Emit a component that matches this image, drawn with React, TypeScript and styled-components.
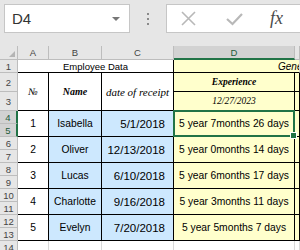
import React from "react";
import styled, { createGlobalStyle } from "styled-components";

const GlobalStyle = createGlobalStyle`
  html, body {
    margin: 0;
    padding: 0;
    width: 300px;
    height: 250px;
    overflow: hidden;
    background: #ffffff;
    font-family: "Liberation Sans", Arial, sans-serif;
  }
`;

const GREEN = "#217346";
const GRID = "#d9d9d9";
const BLUE = "#cde8fe";
const YELLOW = "#ffffcc";

const FormulaBar = styled.div`
  display: flex;
  align-items: flex-start;
  height: 46px;
  padding: 4px 0 0 4px;
  box-sizing: border-box;
  background: #e6e6e6;
`;

const NameBox = styled.div`
  display: flex;
  align-items: center;
  justify-content: space-between;
  width: 126px;
  height: 29px;
  box-sizing: border-box;
  padding: 0 9px 0 7px;
  background: #fff;
  border: 1px solid #c6c6c6;
  font-size: 15px;
  color: #333;
`;

const Caret = styled.span`
  width: 0;
  height: 0;
  border-left: 4px solid transparent;
  border-right: 4px solid transparent;
  border-top: 4px solid #777;
`;

const Dots = styled.div`
  display: flex;
  flex-direction: column;
  gap: 3px;
  margin: 9px 0 0 17px;
  span {
    width: 2px;
    height: 2px;
    background: #8a8a8a;
  }
`;

const FormulaBox = styled.div`
  display: flex;
  align-items: center;
  flex: 1;
  height: 29px;
  margin-left: 17px;
  box-sizing: border-box;
  padding-left: 14px;
  background: #fff;
  border: 1px solid #c6c6c6;
  border-right: none;
`;

const Tool = styled.span<{ $gap: number }>`
  display: flex;
  margin-left: ${(p) => p.$gap}px;
`;

const Fx = styled.span`
  font-family: "Liberation Serif", serif;
  font-style: italic;
  font-size: 18px;
  color: #4a4a4a;
  margin-left: 27px;
`;

const Sheet = styled.div`
  display: grid;
  grid-template-columns: 18px 31px 53px 72px 121px 1fr;
  grid-template-rows: 14px 13px 19px 19px repeat(10, 13px) 13px;
`;

const Corner = styled.div`
  grid-column: 1;
  grid-row: 1;
  position: relative;
  background: #e6e6e6;
  border-right: 1px solid #bdbdbd;
  border-bottom: 1px solid #bdbdbd;
  &::after {
    content: "";
    position: absolute;
    right: 2px;
    bottom: 2px;
    border-left: 6px solid transparent;
    border-bottom: 6px solid #b4b4b4;
  }
`;

const ColHead = styled.div<{ $c: number; $sel?: boolean }>`
  grid-column: ${(p) => p.$c};
  grid-row: 1;
  display: flex;
  align-items: center;
  justify-content: center;
  background: ${(p) => (p.$sel ? "#d2d2d2" : "#e6e6e6")};
  border-right: 1px solid #bdbdbd;
  border-bottom: ${(p) => (p.$sel ? `2px solid ${GREEN}` : "1px solid #bdbdbd")};
  font-size: 9.5px;
  color: ${(p) => (p.$sel ? "#1e5c3a" : "#444")};
`;

const RowHead = styled.div<{ $r: number; $sel?: boolean }>`
  grid-column: 1;
  grid-row: ${(p) => p.$r};
  display: flex;
  align-items: center;
  justify-content: center;
  background: ${(p) => (p.$sel ? "#d2d2d2" : "#e6e6e6")};
  border-right: ${(p) => (p.$sel ? `2px solid ${GREEN}` : "1px solid #bdbdbd")};
  border-bottom: 1px solid #bdbdbd;
  font-size: 9.5px;
  color: ${(p) => (p.$sel ? "#1e5c3a" : "#444")};
`;

const Cell = styled.div<{
  $c: number;
  $r: number;
  $cs?: number;
  $rs?: number;
  $bg?: string;
  $right?: string;
  $bottom?: string;
  $align?: string;
}>`
  grid-column: ${(p) => p.$c} / span ${(p) => p.$cs ?? 1};
  grid-row: ${(p) => p.$r} / span ${(p) => p.$rs ?? 1};
  display: flex;
  align-items: center;
  justify-content: ${(p) => p.$align ?? "center"};
  min-width: 0;
  overflow: hidden;
  white-space: nowrap;
  background: ${(p) => p.$bg ?? "#fff"};
  border-right: 1px solid ${(p) => p.$right ?? GRID};
  border-bottom: 1px solid ${(p) => p.$bottom ?? GRID};
  font-size: 10.3px;
  color: #000;
`;

const Title = styled.span`
  font-size: 9.5px;
`;

const GroupTitle = styled.span`
  font-style: italic;
  font-size: 10px;
  padding-left: 104px;
`;

const Caption = styled.span<{ $size: number; $bold?: boolean }>`
  font-family: "Liberation Serif", serif;
  font-style: italic;
  font-weight: ${(p) => (p.$bold ? 700 : 400)};
  font-size: ${(p) => p.$size}px;
`;

const DateText = styled.span`
  font-size: 11.5px;
  padding-right: 8px;
`;

const Selected = styled.div`
  position: absolute;
  inset: -1px;
  border: 2px solid ${GREEN};
  pointer-events: none;
`;

const Handle = styled.div`
  position: absolute;
  right: -4px;
  bottom: -4px;
  width: 5px;
  height: 5px;
  background: ${GREEN};
  border: 1px solid #fff;
`;

const ActiveCell = styled(Cell)`
  position: relative;
  overflow: visible;
`;

const employees = [
  { n: 1, name: "Isabella", date: "5/1/2018", exp: "5 year 7months 26 days" },
  { n: 2, name: "Oliver", date: "12/13/2018", exp: "5 year 0months 14 days" },
  { n: 3, name: "Lucas", date: "6/10/2018", exp: "5 year 6months 17 days" },
  { n: 4, name: "Charlotte", date: "9/16/2018", exp: "5 year 3months 11 days" },
  { n: 5, name: "Evelyn", date: "7/20/2018", exp: "5 year 5months 7 days" },
];

const B = "#000";

const App: React.FC = () => {
  const rows = Array.from({ length: 14 }, (_, i) => i + 1);
  return (
    <>
      <GlobalStyle />
      <FormulaBar>
        <NameBox>
          D4
          <Caret />
        </NameBox>
        <Dots>
          <span />
          <span />
          <span />
        </Dots>
        <FormulaBox>
          <Tool $gap={0}>
            <svg width="15" height="15" viewBox="0 0 15 15">
              <path d="M1 1 L14 14 M14 1 L1 14" stroke="#b8b8b8" strokeWidth="1.6" fill="none" />
            </svg>
          </Tool>
          <Tool $gap={30}>
            <svg width="17" height="14" viewBox="0 0 17 14">
              <path d="M1 7 L6.5 12 L16 2" stroke="#b8b8b8" strokeWidth="2.2" fill="none" />
            </svg>
          </Tool>
          <Fx>fx</Fx>
        </FormulaBox>
      </FormulaBar>
      <Sheet>
        <Corner />
        {["A", "B", "C", "D", "E"].map((l, i) => (
          <ColHead key={l} $c={i + 2} $sel={l === "D"}>
            {l !== "E" && l}
          </ColHead>
        ))}
        {rows.map((r) => (
          <RowHead key={r} $r={r + 1} $sel={r === 4 || r === 5}>
            {r}
          </RowHead>
        ))}

        <Cell $c={2} $r={2} $cs={3} $right={B} $bottom={B}>
          <Title>Employee Data</Title>
        </Cell>
        <Cell $c={5} $r={2} $cs={2} $bg={YELLOW} $bottom={B} $align="flex-start">
          <GroupTitle>General information</GroupTitle>
        </Cell>

        <Cell $c={2} $r={3} $rs={2} $right={B} $bottom={B}>
          <Caption $size={10}>№</Caption>
        </Cell>
        <Cell $c={3} $r={3} $rs={2} $right={B} $bottom={B}>
          <Caption $size={10} $bold>Name</Caption>
        </Cell>
        <Cell $c={4} $r={3} $rs={2} $right={B} $bottom={B}>
          <Caption $size={11}>date of receipt</Caption>
        </Cell>
        <Cell $c={5} $r={3} $bg={YELLOW} $right={B} $bottom={B}>
          <Caption $size={9.5} $bold>Experience</Caption>
        </Cell>
        <Cell $c={5} $r={4} $bg={YELLOW} $right={B} $bottom={B}>
          <Caption $size={9.5}>12/27/2023</Caption>
        </Cell>
        <Cell $c={6} $r={3} $bg={YELLOW} $right={B} $bottom={B} />
        <Cell $c={6} $r={4} $bg={YELLOW} $right={B} $bottom={B} />

        {employees.map((e, i) => {
          const r = 5 + i * 2;
          const Exp = i === 0 ? ActiveCell : Cell;
          return (
            <React.Fragment key={e.n}>
              <Cell $c={2} $r={r} $rs={2} $right={B} $bottom={B}>
                {e.n}
              </Cell>
              <Cell $c={3} $r={r} $rs={2} $bg={BLUE} $right={B} $bottom={B}>
                {e.name}
              </Cell>
              <Cell $c={4} $r={r} $rs={2} $bg={BLUE} $right={B} $bottom={B} $align="flex-end">
                <DateText>{e.date}</DateText>
              </Cell>
              <Exp $c={5} $r={r} $rs={2} $bg={YELLOW} $right={B} $bottom={B}>
                {e.exp}
                {i === 0 && (
                  <Selected>
                    <Handle />
                  </Selected>
                )}
              </Exp>
              <Cell $c={6} $r={r} $rs={2} $bg={YELLOW} $right={B} $bottom={B} />
            </React.Fragment>
          );
        })}

        {[2, 3, 4, 5, 6].map((c) => (
          <Cell key={c} $c={c} $r={15} />
        ))}
      </Sheet>
    </>
  );
};

export default App;
